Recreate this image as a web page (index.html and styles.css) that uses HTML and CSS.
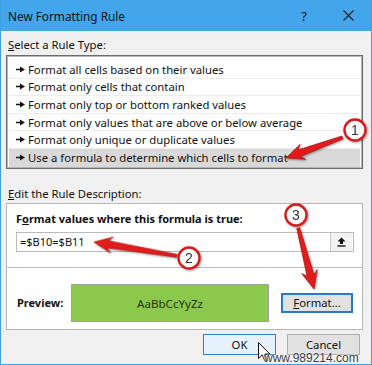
FILE: index.html
```html
<!DOCTYPE html>
<html lang="en">
  <head>
    <meta charset="UTF-8" />
    <title>New Formatting Rule</title>
    <link rel="stylesheet" href="styles.css">
  </head>
  <body>
    <div class="dialog">
      <div class="titlebar">
        <span class="title">New Formatting Rule</span>
        <span class="help">?</span>
        <svg class="close" width="11" height="11" viewBox="0 0 11 11">
          <path d="M0.5 0.5 L10.5 10.5 M10.5 0.5 L0.5 10.5" stroke="#1a1a1a" stroke-width="1.1" />
        </svg>
      </div>

      <div class="body">
        <div class="section-label"><u>S</u>elect a Rule Type:</div>
        <ul class="rule-list">
          <li><svg class="bullet" width="9" height="7" viewBox="0 0 9 7"><path d="M0 2.8 H4 V0.5 L9 3.5 L4 6.5 V4.2 H0 Z" fill="#111" /></svg>Format all cells based on their values</li>
          <li><svg class="bullet" width="9" height="7" viewBox="0 0 9 7"><path d="M0 2.8 H4 V0.5 L9 3.5 L4 6.5 V4.2 H0 Z" fill="#111" /></svg>Format only cells that contain</li>
          <li><svg class="bullet" width="9" height="7" viewBox="0 0 9 7"><path d="M0 2.8 H4 V0.5 L9 3.5 L4 6.5 V4.2 H0 Z" fill="#111" /></svg>Format only top or bottom ranked values</li>
          <li><svg class="bullet" width="9" height="7" viewBox="0 0 9 7"><path d="M0 2.8 H4 V0.5 L9 3.5 L4 6.5 V4.2 H0 Z" fill="#111" /></svg>Format only values that are above or below average</li>
          <li><svg class="bullet" width="9" height="7" viewBox="0 0 9 7"><path d="M0 2.8 H4 V0.5 L9 3.5 L4 6.5 V4.2 H0 Z" fill="#111" /></svg>Format only unique or duplicate values</li>
          <li class="selected"><svg class="bullet" width="9" height="7" viewBox="0 0 9 7"><path d="M0 2.8 H4 V0.5 L9 3.5 L4 6.5 V4.2 H0 Z" fill="#111" /></svg>Use a formula to determine which cells to format</li>
        </ul>

        <div class="section-label second"><u>E</u>dit the Rule Description:</div>
        <div class="desc-box">
          <div class="formula-area">
            <div class="formula-label">F<u>o</u>rmat values where this formula is true:</div>
            <div class="formula-input">
              <span class="formula-text">=$B10=$B11</span>
              <span class="collapse-btn">
                <svg width="9" height="10" viewBox="0 0 9 10">
                  <path d="M4.5 0.5 L8.5 4.5 H6 V7 H3 V4.5 H0.5 Z" fill="#111" />
                  <rect x="0.5" y="8.3" width="8" height="1.4" fill="#111" />
                </svg>
              </span>
            </div>
          </div>
          <div class="preview-row">
            <span class="preview-label">Preview:</span>
            <div class="preview-swatch">AaBbCcYyZz</div>
            <span class="btn btn-focus"><u>F</u>ormat...</span>
          </div>
        </div>

        <div class="footer">
          <span class="btn btn-default">OK</span>
          <span class="btn">Cancel</span>
        </div>
      </div>

      <!-- red callouts drawn over the dialog -->
      <svg class="callouts" width="372" height="365" viewBox="0 0 372 365">
        <g class="marks">
          <polygon transform="translate(285 158) rotate(160)" points="-60,-1.5 -14,-3.5 -18,-8 0,0 -18,8 -14,3.5 -60,1.5" />
          <polygon transform="translate(93 242) rotate(-170.5)" points="-84,-1.5 -14,-3.5 -18,-8 0,0 -18,8 -14,3.5 -84,1.5" />
          <polygon transform="translate(313 289) rotate(75.5)" points="-63,-1.5 -14,-3.5 -18,-8 0,0 -18,8 -14,3.5 -63,1.5" />
          <circle cx="354" cy="130" r="10.5" />
          <circle cx="188" cy="258" r="10.5" />
          <circle cx="295" cy="215" r="10.5" />
        </g>
        <text x="354" y="135">1</text>
        <text x="188" y="263">2</text>
        <text x="295" y="220">3</text>
      </svg>

      <svg class="cursor" width="13" height="21" viewBox="0 0 13 21">
        <path d="M0.5 0.5 V16.5 L4.3 12.8 L7 19.3 L9.4 18.3 L6.8 12 H11.8 Z" fill="#fff" stroke="#111" stroke-width="1" />
      </svg>

      <div class="watermark">www.989214.com</div>
    </div>
  </body>
</html>
```

FILE: styles.css
```css
body {
  margin: 0;
  font-family: 'Noto Sans', 'Open Sans', sans-serif;
  font-size: 11.3px;
  color: #111;
}

.dialog {
  position: relative;
  width: 372px;
  height: 365px;
  box-sizing: border-box;
  background-color: #f0f0f0;
  border: 1px solid #3f9fe4;
  border-top: none;
  overflow: hidden;
}

.titlebar {
  display: flex;
  align-items: center;
  height: 31px;
  margin: 0 -1px;
  padding: 0 18px 0 8px;
  background-color: #44a6ea;
}
.title {
  flex: 1;
  font-size: 11.8px;
  color: #111;
}
.help {
  font-size: 13px;
  margin-right: 36px;
  color: #111;
}

.body {
  padding: 0 8px 0 5px;
}

.section-label {
  height: 16px;
  line-height: 16px;
  margin-top: 6px;
  padding-left: 2px;
}
.section-label.second {
  margin-top: 17px;
}

.rule-list {
  list-style: none;
  margin: 2px 0 0 0;
  padding: 5px 2px 1px 2px;
  background-color: #fff;
  border: 1px solid #6c6c6c;
  box-shadow: inset 0 0 0 1px #b4b4b4;
}
.rule-list li {
  display: flex;
  align-items: center;
  height: 17.6px;
  box-sizing: border-box;
  padding-left: 7px;
  border-bottom: 1px solid #ececec;
}
.rule-list li:last-child {
  border-bottom: none;
}
.rule-list li.selected {
  background-color: #d9d9d9;
}
.bullet {
  margin-right: 3px;
}

.desc-box {
  margin-top: 1px;
  background-color: #fff;
  border: 1px solid #b5b5b5;
}
.formula-area {
  padding: 8px 8px 15px 9px;
  border-bottom: 1px solid #bdbdbd;
}
.formula-label {
  height: 14px;
  line-height: 14px;
  font-size: 11px;
  font-weight: bold;
}
.formula-input {
  display: flex;
  align-items: center;
  height: 20px;
  margin-top: 6px;
  box-sizing: border-box;
  border: 1px solid #b9b9b9;
}
.formula-text {
  flex: 1;
  padding-left: 3px;
  font-size: 11px;
}
.collapse-btn {
  display: flex;
  align-items: center;
  justify-content: center;
  width: 21px;
  height: 100%;
  margin-right: 1px;
  border-left: 1px solid #c8c8c8;
  background-color: #f3f3f3;
}

.preview-row {
  display: flex;
  align-items: center;
  padding: 16px 0 7px 10px;
}
.preview-label {
  width: 54px;
  font-size: 11px;
  font-weight: bold;
}
.preview-swatch {
  width: 198px;
  height: 38px;
  line-height: 38px;
  box-sizing: border-box;
  text-align: center;
  background-color: #8cc84b;
  border: 1px solid #a3a3a3;
  color: #263318;
  font-size: 11.6px;
}

.btn {
  display: inline-block;
  width: 73px;
  height: 21px;
  line-height: 19px;
  box-sizing: border-box;
  text-align: center;
  background-color: #e1e1e1;
  border: 1px solid #adadad;
  color: #111;
}
.btn-focus {
  width: 72px;
  height: 20px;
  line-height: 16px;
  margin-left: 12px;
  border: 2px solid #2b78c8;
}
.btn-default {
  background-color: #e5f1fb;
  border-color: #2a7fd3;
}

.footer {
  display: flex;
  justify-content: flex-end;
  gap: 11px;
  margin: 4px 3px 0 0;
}

.callouts {
  position: absolute;
  left: 0;
  top: 0;
}
.marks {
  filter: drop-shadow(1px 1px 1px rgba(0, 0, 0, 0.4));
}
.marks polygon {
  fill: #e31b1b;
  stroke: #a50f0f;
  stroke-width: 0.6;
}
.marks circle {
  fill: #fff;
  stroke: #d51c1c;
  stroke-width: 2.4;
}
.callouts text {
  font-family: 'Liberation Sans', sans-serif;
  font-size: 14px;
  text-anchor: middle;
  fill: #333;
}

.cursor {
  position: absolute;
  left: 257px;
  top: 342px;
}

.watermark {
  position: absolute;
  left: 263px;
  top: 352px;
  line-height: 12px;
  font-family: 'Liberation Sans', sans-serif;
  font-size: 12px;
  color: #3a3a3a;
  text-shadow: 0 0 2px #fff, 0 0 2px #fff;
}
```
